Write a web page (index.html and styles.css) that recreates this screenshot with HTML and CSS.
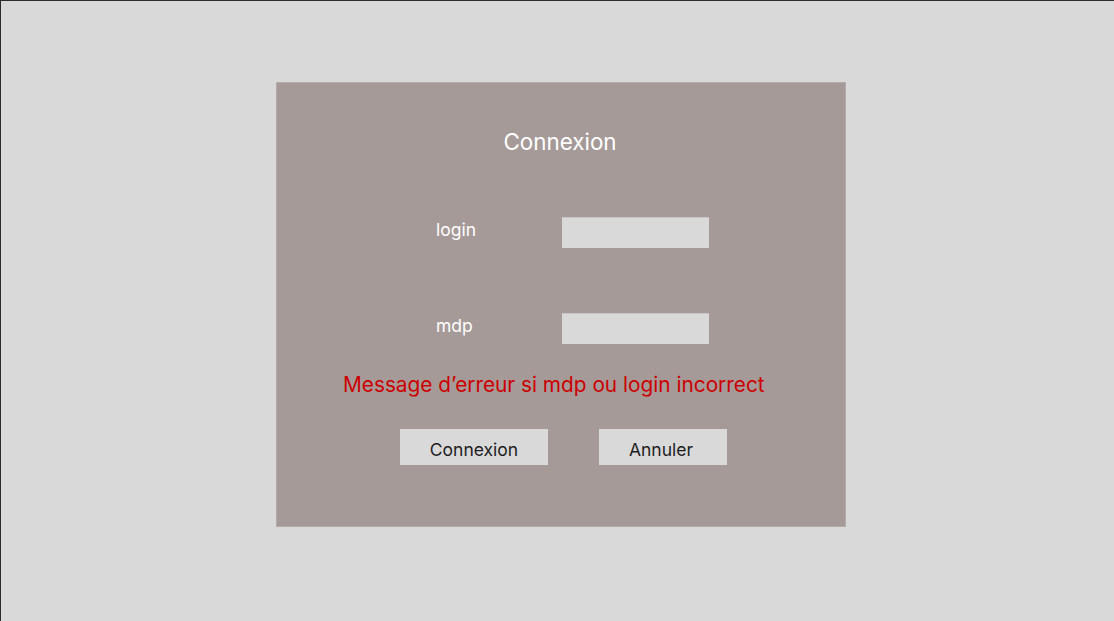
FILE: index.html
```html
<!DOCTYPE html>
<html lang="fr">
<head>
  <meta charset="UTF-8" />
  <title>Connexion</title>
  <link rel="stylesheet" href="styles.css">
</head>
<body>
  <div class="login-card">
    <h1 class="login-title">Connexion</h1>

    <div class="login-row">
      <label class="login-label" for="login">login</label>
      <input class="login-input" id="login" type="text">
    </div>

    <div class="login-row login-row-mdp">
      <label class="login-label" for="mdp">mdp</label>
      <input class="login-input" id="mdp" type="password">
    </div>

    <p class="login-error">Message d’erreur si mdp ou login incorrect</p>

    <div class="login-actions">
      <button class="login-btn btn-connexion">Connexion</button>
      <button class="login-btn btn-annuler">Annuler</button>
    </div>
  </div>
</body>
</html>
```

FILE: styles.css
```css
* {
  box-sizing: border-box;
}
html, body {
  height: 100%;
}
body {
  margin: 0;
  background: #d9d9d9;
  border-top: 1px solid #2c2c2c;
  border-left: 1px solid #2c2c2c;
  font-family: Inter, "Noto Sans", sans-serif;
  overflow: hidden;
}
.login-card {
  margin: 81px 0 0 275px;
  width: 570px;
  height: 445px;
  background: #a69a99;
  border: 1px solid #b4acab;
  display: flex;
  flex-direction: column;
  padding-top: 46px;
}
.login-title {
  margin: 0;
  font-size: 22.4px;
  font-weight: 400;
  line-height: 26px;
  color: #ffffff;
  text-align: center;
  padding-right: 2px;
}
.login-row {
  display: flex;
  align-items: flex-start;
  margin-top: 62px;
  padding-left: 159px;
}
.login-row-mdp {
  margin-top: 65px;
}
.login-label {
  width: 126px;
  font-size: 17.5px;
  line-height: 25px;
  color: #ffffff;
}
.login-input {
  width: 147px;
  height: 31px;
  border: none;
  border-top: 1px solid #c9c5c5;
  background: #d9d9d9;
  outline: none;
}
.login-error {
  margin: 29px 0 0 66px;
  font-size: 20.8px;
  line-height: 24px;
  color: #cc0000;
}
.login-actions {
  display: flex;
  gap: 51px;
  margin-top: 32px;
  padding-left: 123px;
}
.login-btn {
  height: 36px;
  border: none;
  background: #d9d9d9;
  font-family: Inter, "Noto Sans", sans-serif;
  font-size: 17.5px;
  color: #1e1e1e;
  padding: 5px 0 0;
  cursor: pointer;
}
.btn-connexion {
  width: 148px;
}
.btn-annuler {
  width: 128px;
  padding-right: 4px;
}
```
